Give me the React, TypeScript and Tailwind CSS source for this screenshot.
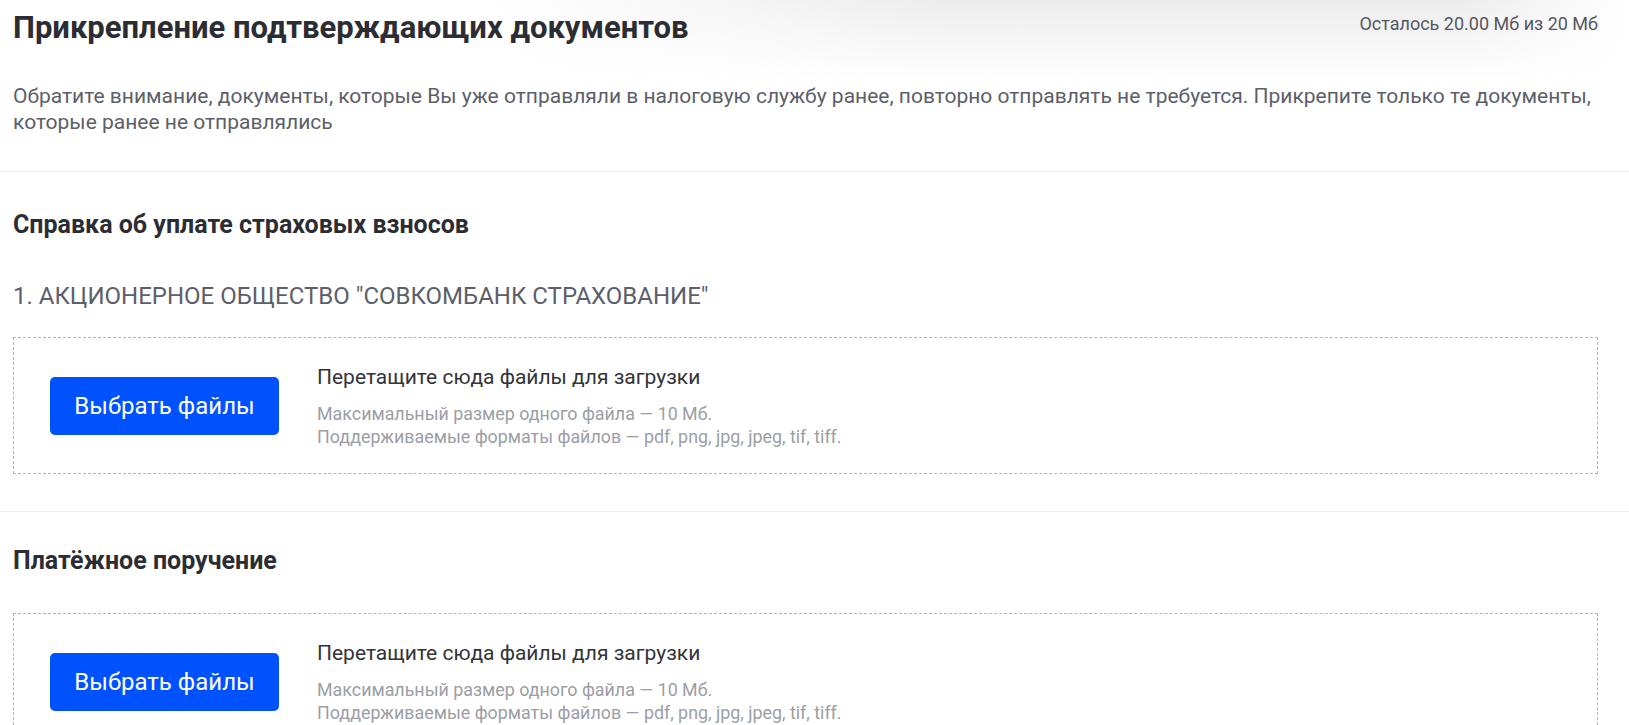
import React from "react";

function UploadBox() {
  return (
    <div className="flex h-[137px] items-center border border-dashed border-[#b4b4b4] pl-[36px]">
      <button className="h-[58px] w-[229px] shrink-0 rounded-[5px] bg-[#0052ff] text-[24px] leading-[30px] text-white">
        Выбрать файлы
      </button>
      <div className="ml-[38px] flex flex-col">
        <div className="text-[21px] leading-[26px] text-[#333438]">
          Перетащите сюда файлы для загрузки
        </div>
        <div className="mt-[12px] text-[17.85px] leading-[23px] text-[#9c9ea5]">
          Максимальный размер одного файла — 10 Мб.
          <br />
          Поддерживаемые форматы файлов — pdf, png, jpg, jpeg, tif, tiff.
        </div>
      </div>
    </div>
  );
}

export default function App() {
  return (
    <div className="min-h-[725px] w-full overflow-hidden bg-white font-['Roboto','Noto_Sans',sans-serif]">
      <div className="relative border-b border-[#e5edf8] pb-[36px]">
        <div className="pointer-events-none absolute left-[30%] right-0 top-0 h-[80px] bg-[linear-gradient(to_bottom,#ececec,rgba(255,255,255,0))] [mask-image:linear-gradient(to_right,transparent_0%,black_40%,black_85%,transparent_100%)]" />
        <div className="relative pl-[13px] pr-[31px] pt-[11px]">
          <div className="flex items-start justify-between">
            <h1 className="text-[31px] font-bold leading-[34px] text-[#2b2d33]">
              Прикрепление подтверждающих документов
            </h1>
            <span className="mt-[2px] text-[18px] leading-[22px] text-[#55575e]">
              Осталось 20.00 Мб из 20 Мб
            </span>
          </div>
          <p className="mt-[38px] text-[21px] leading-[26px] text-[#5c5f69]">
            Обратите внимание, документы, которые Вы уже отправляли в налоговую службу ранее, повторно отправлять не требуется. Прикрепите только те документы, которые ранее не отправлялись
          </p>
        </div>
      </div>

      <div className="border-b border-[#eeeff2] pb-[37px] pl-[13px] pr-[31px] pt-[40px]">
        <h2 className="text-[25px] font-bold leading-[26px] text-[#2b2d33]">
          Справка об уплате страховых взносов
        </h2>
        <div className="mt-[42px] text-[24px] leading-[32px] text-[#5c5f69]">
          1. АКЦИОНЕРНОЕ ОБЩЕСТВО "СОВКОМБАНК СТРАХОВАНИЕ"
        </div>
        <div className="mt-[25px]">
          <UploadBox />
        </div>
      </div>

      <div className="pb-[37px] pl-[13px] pr-[31px] pt-[36px]">
        <h2 className="text-[25px] font-bold leading-[26px] text-[#2b2d33]">
          Платёжное поручение
        </h2>
        <div className="mt-[39px]">
          <UploadBox />
        </div>
      </div>
    </div>
  );
}
